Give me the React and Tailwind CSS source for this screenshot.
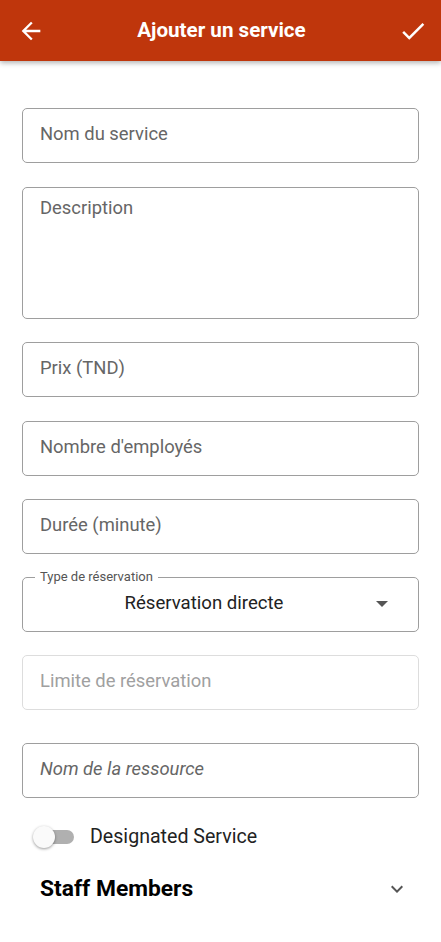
import React from "react";

const Field = ({ label, className = "", textClass = "" }) => (
  <div
    className={`flex h-[55px] items-center rounded-[5px] border border-[#9e9e9e] px-[17px] pb-[3px] ${className}`}
  >
    <span className={`text-[18.4px] text-[#666666] ${textClass}`}>{label}</span>
  </div>
);

const App = () => {
  return (
    <div
      className="min-h-[942px] w-[441px] bg-white"
      style={{ fontFamily: "Roboto, 'Noto Sans', sans-serif" }}
    >
      <header className="relative z-10 flex h-[61px] items-center justify-between bg-[#bf360c] pl-[17px] pr-[13px] shadow-[0_2px_5px_rgba(0,0,0,0.3)]">
        <svg width="28" height="28" viewBox="0 0 24 24" fill="white">
          <path d="M20 11H7.83l5.59-5.59L12 4l-8 8 8 8 1.41-1.41L7.83 13H20v-2z" />
        </svg>
        <h1 className="text-[20.6px] font-bold text-white">Ajouter un service</h1>
        <svg width="30" height="30" viewBox="0 0 24 24" fill="white">
          <path d="M9 16.17 4.83 12l-1.42 1.41L9 19 21 7l-1.41-1.41z" />
        </svg>
      </header>

      <main className="flex flex-col px-[22px] pt-[47px]">
        <Field label="Nom du service" />
        <div className="mt-[24px] h-[132px] rounded-[5px] border border-[#9e9e9e] px-[17px] pt-[6px]">
          <span className="text-[18.4px] text-[#666666]">Description</span>
        </div>
        <Field label="Prix (TND)" className="mt-[23px]" />
        <Field label="Nombre d'employés" className="mt-[24px]" />
        <Field label="Durée (minute)" className="mt-[23px]" />

        <div className="relative mt-[23px] flex h-[55px] items-center rounded-[5px] border border-[#9e9e9e] pl-[17px] pr-[30px] pb-[2px]">
          <span className="absolute -top-[9px] left-[12px] bg-white px-[5px] text-[13px] leading-[16px] text-[#555555]">
            Type de réservation
          </span>
          <span className="flex-1 pr-[8px] text-center text-[18.6px] text-[#222222]">
            Réservation directe
          </span>
          <svg width="12" height="6" viewBox="0 0 10 5" fill="#555555">
            <path d="M0 0l5 5 5-5z" />
          </svg>
        </div>

        <Field
          label="Limite de réservation"
          className="mt-[23px] border-[#dddddd]"
          textClass="text-[#a0a0a0]"
        />

        <Field
          label="Nom de la ressource"
          className="mt-[33px]"
          textClass="text-[16.4px] italic"
        />

        <div className="mt-[24px] flex items-center pl-[12px]">
          <div className="relative h-[14px] w-[40px] rounded-full bg-[#b0b0b0]">
            <div className="absolute -left-[1px] -top-[4px] h-[22px] w-[22px] rounded-full bg-[#fafafa] shadow-[0_1px_3px_rgba(0,0,0,0.4)]" />
          </div>
          <span className="ml-[16px] text-[19.6px] text-[#222222]">
            Designated Service
          </span>
        </div>

        <div className="mt-[21px] flex items-center justify-between pl-[18px] pr-[10px]">
          <span className="text-[22.8px] font-bold text-black">Staff Members</span>
          <svg width="24" height="24" viewBox="0 0 24 24" fill="#555555">
            <path d="M7.41 8.59 12 13.17l4.59-4.58L18 10l-6 6-6-6 1.41-1.41z" />
          </svg>
        </div>
      </main>
    </div>
  );
};

export default App;
